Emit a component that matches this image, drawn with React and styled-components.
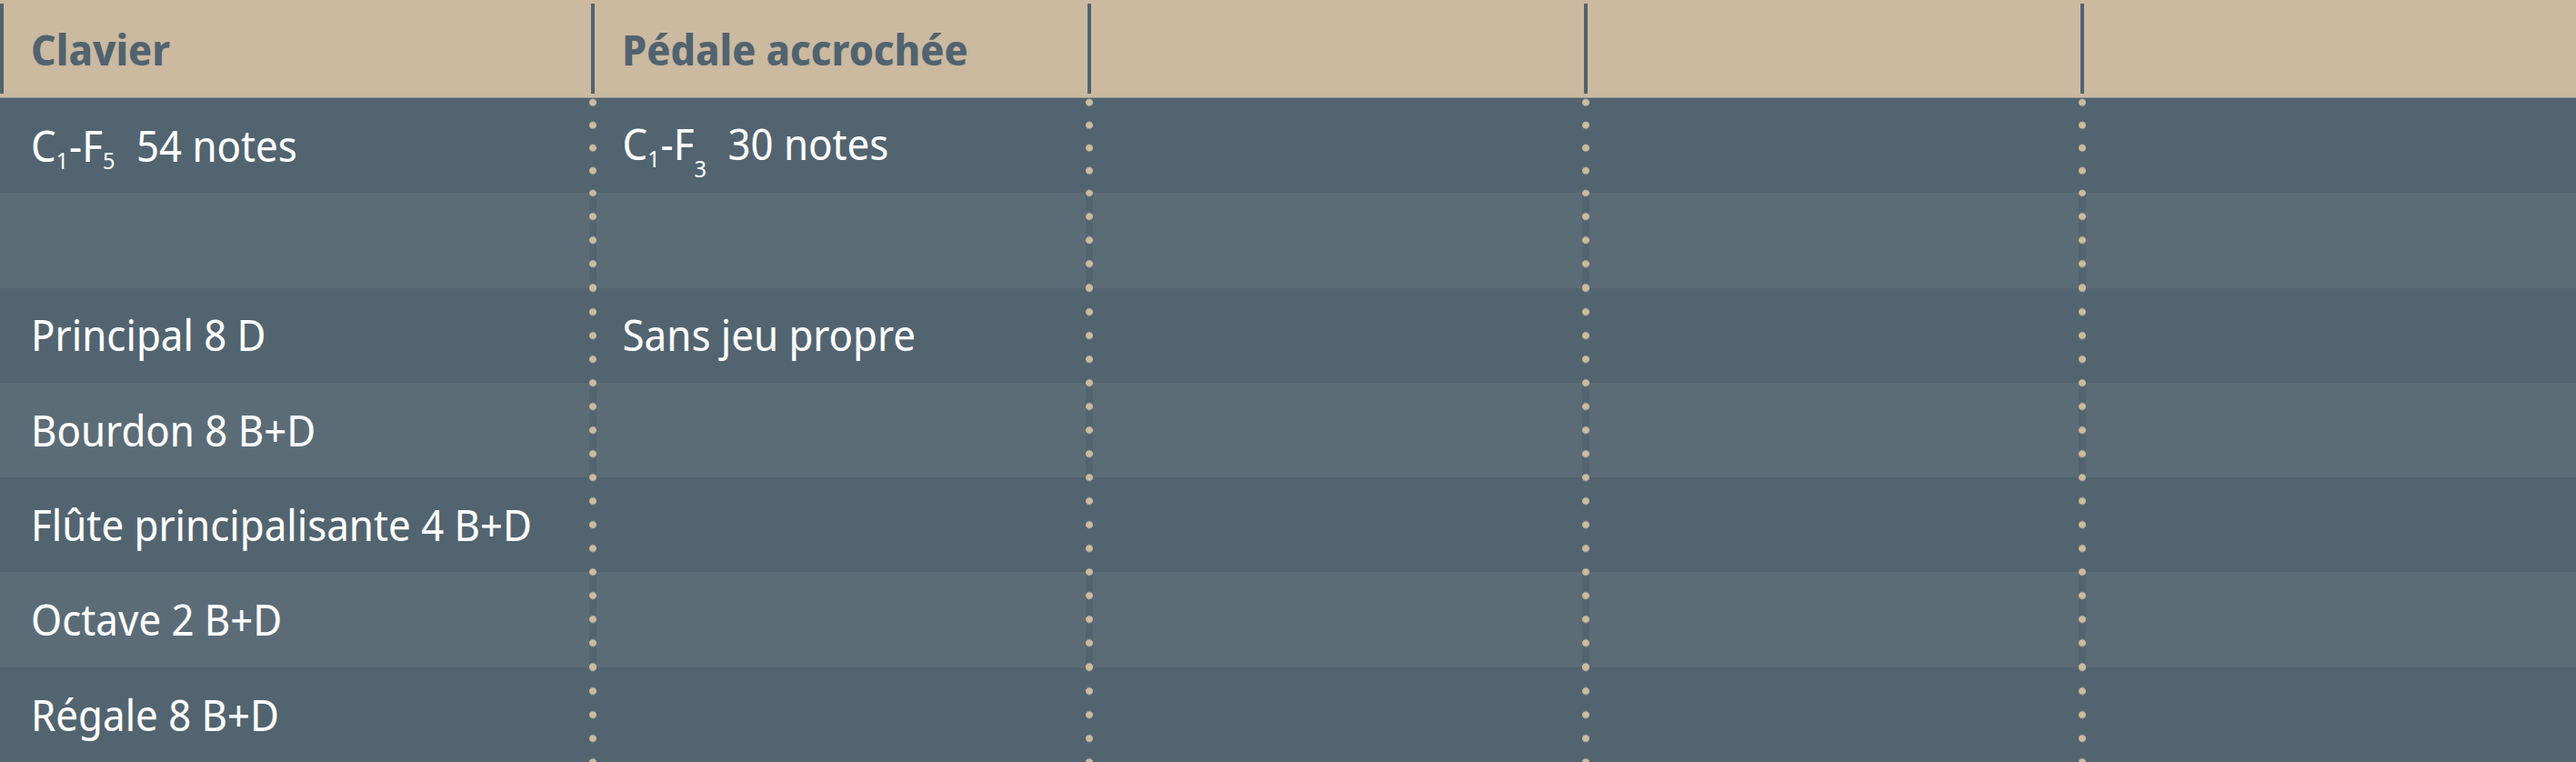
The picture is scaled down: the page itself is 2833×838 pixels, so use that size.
import styled, { createGlobalStyle } from "styled-components";

const Global = createGlobalStyle`
  body {
    margin: 0;
    background: #52646f;
    font-family: "Noto Sans Display", "Noto Sans", sans-serif;
  }
`;

const colors = {
	sand: "#cbb9a0",
	slate: "#50636f",
	rowDark: "#52646f",
	rowLight: "#5b6c77",
	dot: "#cdbb9e",
	line: "#8a9195",
};

const headers = ["Clavier", "Pédale accrochée", "", "", ""];

const App = () => {
	const rows = [
		[
			<>
				C<Sub>1</Sub>-F<Sub>5</Sub>
				{"\u00a0 54 notes"}
			</>,
			<>
				C<Sub>1</Sub>-F<Sub $low>3</Sub>
				{"\u00a0 30 notes"}
			</>,
		],
		[],
		["Principal 8 D", "Sans jeu propre"],
		["Bourdon 8 B+D"],
		["Flûte principalisante 4 B+D"],
		["Octave 2 B+D"],
		["Régale 8 B+D"],
	];

	return (
		<>
			<Global />
			<Table>
				<HeaderRow>
					{headers.map((title, idx) => (
						<HeaderCell key={idx}>
							<Rule />
							<span>{title}</span>
						</HeaderCell>
					))}
				</HeaderRow>
				<Body>
					{rows.map((cells, rowIdx) => (
						<BodyRow key={rowIdx} $alt={rowIdx % 2 === 1}>
							{[0, 1, 2, 3, 4].map((col) => (
								<Cell key={col} $dotted={col > 0} $lead={rowIdx === 0}>
									{cells[col] && <Text>{cells[col]}</Text>}
								</Cell>
							))}
						</BodyRow>
					))}
				</Body>
			</Table>
		</>
	);
};

export default App;

const Table = styled.div`
	display: flex;
	flex-direction: column;
	width: 2833px;
	height: 838px;
	overflow: hidden;
`;

const HeaderRow = styled.div`
	display: grid;
	grid-template-columns: 650px 546px 546px 546px 1fr;
	height: 107px;
	background: ${colors.sand};
	border-bottom: 1px solid ${colors.line};
`;

const HeaderCell = styled.div`
	display: flex;
	align-items: center;
	gap: 30px;
	padding: 4px 0;
	color: ${colors.slate};
	font-size: 46px;
	font-weight: 700;
	line-height: 1;
	white-space: nowrap;
	span {
		padding-top: 1px;
	}
`;

const Rule = styled.i`
	align-self: stretch;
	flex: 0 0 4px;
	background: ${colors.slate};
`;

const Body = styled.div`
	display: grid;
	grid-auto-rows: 1fr;
	flex: 1;
`;

const BodyRow = styled.div`
	display: grid;
	grid-template-columns: 648px 546px 546px 546px 1fr;
	background: ${({ $alt }) => ($alt ? colors.rowLight : colors.rowDark)};
`;

const Cell = styled.div`
	display: flex;
	align-items: center;
	padding-left: ${({ $dotted }) => ($dotted ? "36.5px" : "34px")};
	background: ${({ $dotted, $lead }) =>
		$dotted
			? `radial-gradient(circle at center, ${colors.dot} 3.5px, transparent 4.4px)
			   left 0 top ${$lead ? "-7.8px" : "-13px"} / 8px ${$lead ? "25px" : "26.04px"} repeat-y,
			   linear-gradient(${colors.rowDark}, ${colors.rowDark}) left top / 8px 100% no-repeat`
			: "none"};
`;

const Text = styled.span`
	color: #ffffff;
	font-size: 46.5px;
	line-height: 1;
	white-space: nowrap;
`;

const Sub = styled.sub`
	font-size: 25px;
	line-height: 0;
	vertical-align: ${({ $low }) => ($low ? "-19px" : "-8px")};
	margin-right: 1px;
`;
